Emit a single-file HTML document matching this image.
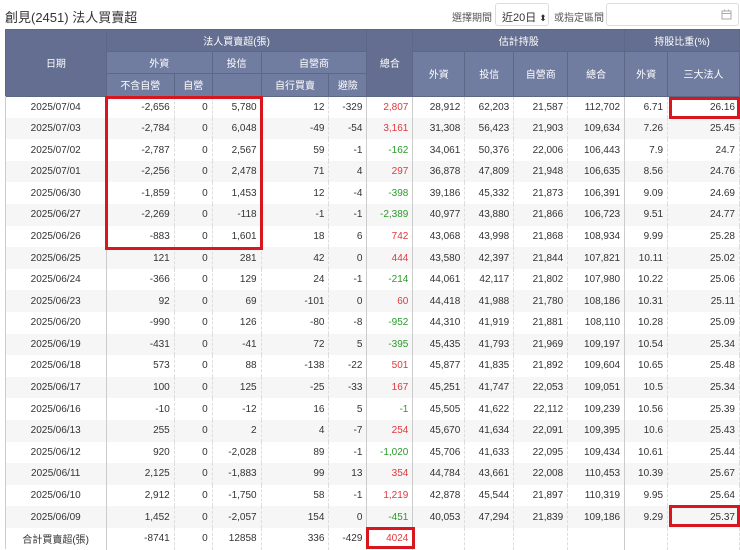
<!DOCTYPE html>
<html><head><meta charset="utf-8">
<style>
*{box-sizing:border-box;margin:0;padding:0}
body{width:740px;height:549px;overflow:hidden;background:#fff;font-family:"Liberation Sans","Noto Sans CJK TC",sans-serif;position:relative;color:#333}
.title{position:absolute;left:5px;top:7px;font-size:13px;color:#333}
.sel{position:absolute;left:452px;top:9px;font-size:10px;color:#555}
.box1{position:absolute;left:495px;top:3px;width:54px;height:23px;border:1px solid #ddd;border-radius:3px;font-size:11px;padding:5px 0 0 6px;color:#333;white-space:nowrap}
.sel2{position:absolute;left:554px;top:9px;font-size:10px;color:#555}
.date{position:absolute;left:606px;top:3px;width:133px;height:23px;border:1px solid #ddd;border-radius:3px}
.tbl{position:absolute;left:5px;top:29px;border-collapse:collapse;table-layout:fixed;font-size:10px}
.tbl th{color:#fff;font-weight:normal;background:#717da0;border:1px solid #5d6786;height:22.2px;font-size:10px}
.tbl th.d{background:#636e90}
.tbl td{height:21.6px;text-align:right;padding-right:4px;border-right:1px dashed #ddd;color:#333;white-space:nowrap;background-color:#ffffff}
.tbl td.c{text-align:center;border-right:1px solid #ccc;padding:0;background-color:#ffffff}
.tbl td.s{border-right:1px solid #ccc}
.tbl tr.e td{background-color:#f6f6f6}
.r{color:#e0383e !important}.g{color:#2c9b2c !important}
.rb{position:absolute;border:3px solid #d9151d}
.lb{position:absolute;left:5px;top:96px;width:1px;height:453px;background:#ccc}
</style></head><body>
<div class="title">創見(2451) 法人買賣超</div>
<div class="sel">選擇期間</div>
<div class="box1">近20日 <span style="font-size:9px">⬍</span></div>
<div class="sel2">或指定區間</div>
<div class="date"><svg style="position:absolute;right:6px;top:5px" width="11" height="11" viewBox="0 0 11 11"><rect x="1" y="2" width="9" height="8" fill="none" stroke="#aaa"/><line x1="1" y1="4.5" x2="10" y2="4.5" stroke="#aaa"/><line x1="3.5" y1="0.5" x2="3.5" y2="2.5" stroke="#aaa"/><line x1="7.5" y1="0.5" x2="7.5" y2="2.5" stroke="#aaa"/></svg></div>
<table class="tbl">
<colgroup><col style="width:101px"><col style="width:68px"><col style="width:38px"><col style="width:49px"><col style="width:68px"><col style="width:38px"><col style="width:46px"><col style="width:52px"><col style="width:49px"><col style="width:54px"><col style="width:57px"><col style="width:43px"><col style="width:72px"></colgroup>
<tr><th class="d" rowspan="3">日期</th><th class="d" colspan="5">法人買賣超(張)</th><th class="d" rowspan="3">總合</th><th class="d" colspan="4">估計持股</th><th class="d" colspan="2">持股比重(%)</th></tr>
<tr><th colspan="2">外資</th><th>投信</th><th colspan="2">自營商</th><th rowspan="2">外資</th><th rowspan="2">投信</th><th rowspan="2">自營商</th><th rowspan="2">總合</th><th rowspan="2">外資</th><th rowspan="2">三大法人</th></tr>
<tr><th>不含自營</th><th>自營</th><th></th><th>自行買賣</th><th>避險</th></tr>
<tr><td class="c">2025/07/04</td><td>-2,656</td><td>0</td><td>5,780</td><td>12</td><td class="s">-329</td><td class="r s">2,807</td><td>28,912</td><td>62,203</td><td>21,587</td><td class="s">112,702</td><td>6.71</td><td>26.16</td></tr>
<tr class="e"><td class="c">2025/07/03</td><td>-2,784</td><td>0</td><td>6,048</td><td>-49</td><td class="s">-54</td><td class="r s">3,161</td><td>31,308</td><td>56,423</td><td>21,903</td><td class="s">109,634</td><td>7.26</td><td>25.45</td></tr>
<tr><td class="c">2025/07/02</td><td>-2,787</td><td>0</td><td>2,567</td><td>59</td><td class="s">-1</td><td class="g s">-162</td><td>34,061</td><td>50,376</td><td>22,006</td><td class="s">106,443</td><td>7.9</td><td>24.7</td></tr>
<tr class="e"><td class="c">2025/07/01</td><td>-2,256</td><td>0</td><td>2,478</td><td>71</td><td class="s">4</td><td class="r s">297</td><td>36,878</td><td>47,809</td><td>21,948</td><td class="s">106,635</td><td>8.56</td><td>24.76</td></tr>
<tr><td class="c">2025/06/30</td><td>-1,859</td><td>0</td><td>1,453</td><td>12</td><td class="s">-4</td><td class="g s">-398</td><td>39,186</td><td>45,332</td><td>21,873</td><td class="s">106,391</td><td>9.09</td><td>24.69</td></tr>
<tr class="e"><td class="c">2025/06/27</td><td>-2,269</td><td>0</td><td>-118</td><td>-1</td><td class="s">-1</td><td class="g s">-2,389</td><td>40,977</td><td>43,880</td><td>21,866</td><td class="s">106,723</td><td>9.51</td><td>24.77</td></tr>
<tr><td class="c">2025/06/26</td><td>-883</td><td>0</td><td>1,601</td><td>18</td><td class="s">6</td><td class="r s">742</td><td>43,068</td><td>43,998</td><td>21,868</td><td class="s">108,934</td><td>9.99</td><td>25.28</td></tr>
<tr class="e"><td class="c">2025/06/25</td><td>121</td><td>0</td><td>281</td><td>42</td><td class="s">0</td><td class="r s">444</td><td>43,580</td><td>42,397</td><td>21,844</td><td class="s">107,821</td><td>10.11</td><td>25.02</td></tr>
<tr><td class="c">2025/06/24</td><td>-366</td><td>0</td><td>129</td><td>24</td><td class="s">-1</td><td class="g s">-214</td><td>44,061</td><td>42,117</td><td>21,802</td><td class="s">107,980</td><td>10.22</td><td>25.06</td></tr>
<tr class="e"><td class="c">2025/06/23</td><td>92</td><td>0</td><td>69</td><td>-101</td><td class="s">0</td><td class="r s">60</td><td>44,418</td><td>41,988</td><td>21,780</td><td class="s">108,186</td><td>10.31</td><td>25.11</td></tr>
<tr><td class="c">2025/06/20</td><td>-990</td><td>0</td><td>126</td><td>-80</td><td class="s">-8</td><td class="g s">-952</td><td>44,310</td><td>41,919</td><td>21,881</td><td class="s">108,110</td><td>10.28</td><td>25.09</td></tr>
<tr class="e"><td class="c">2025/06/19</td><td>-431</td><td>0</td><td>-41</td><td>72</td><td class="s">5</td><td class="g s">-395</td><td>45,435</td><td>41,793</td><td>21,969</td><td class="s">109,197</td><td>10.54</td><td>25.34</td></tr>
<tr><td class="c">2025/06/18</td><td>573</td><td>0</td><td>88</td><td>-138</td><td class="s">-22</td><td class="r s">501</td><td>45,877</td><td>41,835</td><td>21,892</td><td class="s">109,604</td><td>10.65</td><td>25.48</td></tr>
<tr class="e"><td class="c">2025/06/17</td><td>100</td><td>0</td><td>125</td><td>-25</td><td class="s">-33</td><td class="r s">167</td><td>45,251</td><td>41,747</td><td>22,053</td><td class="s">109,051</td><td>10.5</td><td>25.34</td></tr>
<tr><td class="c">2025/06/16</td><td>-10</td><td>0</td><td>-12</td><td>16</td><td class="s">5</td><td class="g s">-1</td><td>45,505</td><td>41,622</td><td>22,112</td><td class="s">109,239</td><td>10.56</td><td>25.39</td></tr>
<tr class="e"><td class="c">2025/06/13</td><td>255</td><td>0</td><td>2</td><td>4</td><td class="s">-7</td><td class="r s">254</td><td>45,670</td><td>41,634</td><td>22,091</td><td class="s">109,395</td><td>10.6</td><td>25.43</td></tr>
<tr><td class="c">2025/06/12</td><td>920</td><td>0</td><td>-2,028</td><td>89</td><td class="s">-1</td><td class="g s">-1,020</td><td>45,706</td><td>41,633</td><td>22,095</td><td class="s">109,434</td><td>10.61</td><td>25.44</td></tr>
<tr class="e"><td class="c">2025/06/11</td><td>2,125</td><td>0</td><td>-1,883</td><td>99</td><td class="s">13</td><td class="r s">354</td><td>44,784</td><td>43,661</td><td>22,008</td><td class="s">110,453</td><td>10.39</td><td>25.67</td></tr>
<tr><td class="c">2025/06/10</td><td>2,912</td><td>0</td><td>-1,750</td><td>58</td><td class="s">-1</td><td class="r s">1,219</td><td>42,878</td><td>45,544</td><td>21,897</td><td class="s">110,319</td><td>9.95</td><td>25.64</td></tr>
<tr class="e"><td class="c">2025/06/09</td><td>1,452</td><td>0</td><td>-2,057</td><td>154</td><td class="s">0</td><td class="g s">-451</td><td>40,053</td><td>47,294</td><td>21,839</td><td class="s">109,186</td><td>9.29</td><td>25.37</td></tr>
<tr><td class="c">合計買賣超(張)</td><td>-8741</td><td>0</td><td>12858</td><td>336</td><td class="s">-429</td><td class="r s">4024</td><td></td><td></td><td></td><td class="s"></td><td></td><td></td></tr>
</table>
<div class="lb"></div>
<div class="rb" style="left:105px;top:96px;width:158px;height:154px"></div>
<div class="rb" style="left:669px;top:97px;width:71px;height:22px"></div>
<div class="rb" style="left:669px;top:505px;width:71px;height:22px"></div>
<div class="rb" style="left:366px;top:527px;width:49px;height:22px"></div>
</body></html>
